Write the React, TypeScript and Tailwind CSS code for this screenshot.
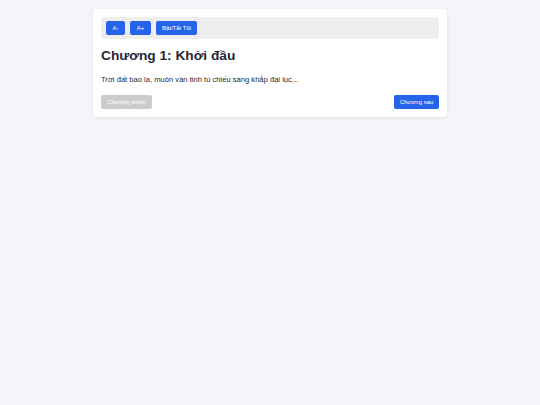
export default function App() {
  return (
    <div className="min-h-screen bg-[#f4f5f9] pt-[9px] font-['Liberation_Sans',Arial,sans-serif]">
      <div className="mx-auto w-[354px] rounded-[4px] bg-white p-[8px] shadow-[0_1px_4px_rgba(0,0,0,0.08)]">
        <div className="flex gap-[5px] rounded-[3px] bg-[#eeeeee] px-[5px] py-[4px]">
          <button className="h-[14px] w-[19px] rounded-[2px] bg-[#2563eb] text-[6px] text-white">A-</button>
          <button className="h-[14px] w-[21px] rounded-[2px] bg-[#2563eb] text-[6px] text-white">A+</button>
          <button className="h-[14px] w-[41px] rounded-[2px] bg-[#2563eb] text-[6px] text-white">Bật/Tắt Tối</button>
        </div>
        <h1 className="mt-[8px] text-[13.7px] leading-[18px] font-bold text-[#1f2937]">Chương 1: Khởi đầu</h1>
        <p className="mt-[10px] text-[7.6px] leading-[10px] text-[#1f2937]">
          Trời đất bao la, muôn vàn tinh tú chiếu sáng khắp đại lục...
        </p>
        <div className="mt-[10px] flex justify-between">
          <button className="h-[14px] w-[51px] rounded-[2px] bg-[#cccccc] text-[6px] text-white">Chương trước</button>
          <button className="h-[14px] w-[45px] rounded-[2px] bg-[#2563eb] text-[6px] text-white">Chương sau</button>
        </div>
      </div>
    </div>
  );
}
